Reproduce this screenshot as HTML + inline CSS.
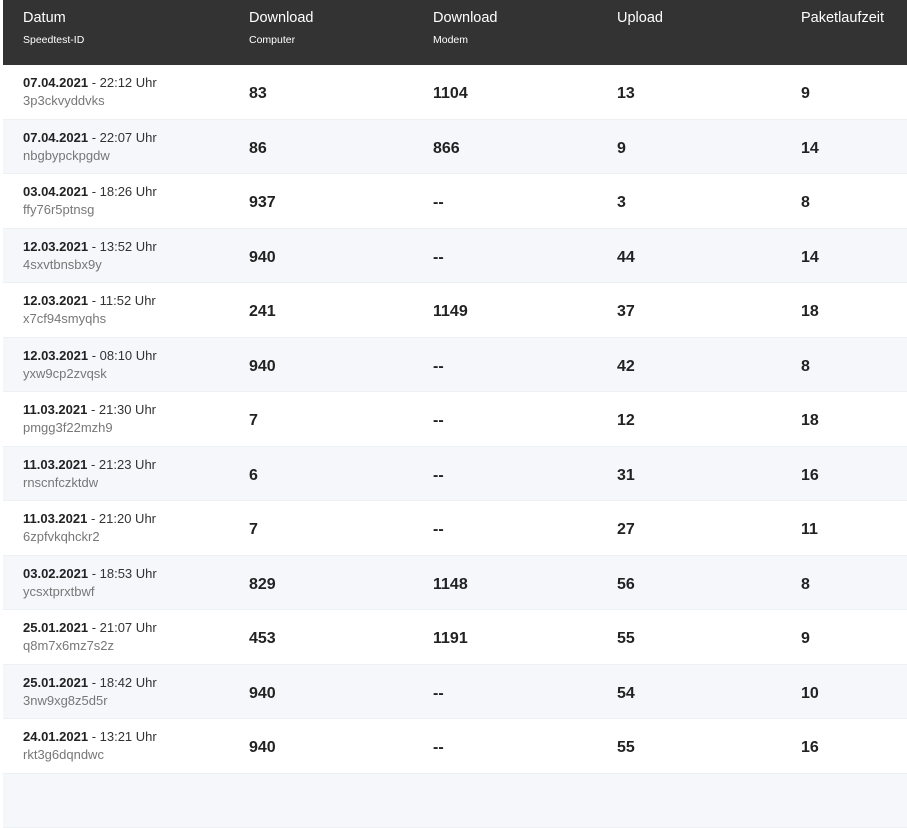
<!DOCTYPE html>
<html><head><meta charset="utf-8"><style>
body{margin:0;width:907px;height:781px;overflow:hidden;background:#fff;font-family:"Liberation Sans",sans-serif;color:#333}
.wrap{position:absolute;left:3px;top:0;width:904px}
.hd{height:65px;background:#333;position:relative;color:#fff}
.hd div{position:absolute;top:10px;font-size:14.5px}
.hd small{display:block;font-size:10.5px;margin-top:8px}
.row{height:54.5px;position:relative;border-bottom:1px solid #eef1f4;box-sizing:border-box}
.row:nth-child(odd){background:#f5f7fa}
.row div{position:absolute}
.d{left:20px;top:10px;font-size:13px;color:#333}
.d b{color:#222}
.d span{display:block;color:#777;margin-top:3px}
.v{top:20px;font-size:16px;font-weight:bold;color:#222}
</style></head><body><div class="wrap">
<div class="hd">
<div style="left:20px">Datum<small>Speedtest-ID</small></div>
<div style="left:246px">Download<small>Computer</small></div>
<div style="left:430px">Download<small>Modem</small></div>
<div style="left:614px">Upload</div>
<div style="left:798px">Paketlaufzeit</div>
</div>
<div id="rows"></div>
</div>
<script>
var d=[["07.04.2021","22:12","3p3ckvyddvks","83","1104","13","9"],["07.04.2021","22:07","nbgbypckpgdw","86","866","9","14"],["03.04.2021","18:26","ffy76r5ptnsg","937","--","3","8"],["12.03.2021","13:52","4sxvtbnsbx9y","940","--","44","14"],["12.03.2021","11:52","x7cf94smyqhs","241","1149","37","18"],["12.03.2021","08:10","yxw9cp2zvqsk","940","--","42","8"],["11.03.2021","21:30","pmgg3f22mzh9","7","--","12","18"],["11.03.2021","21:23","rnscnfczktdw","6","--","31","16"],["11.03.2021","21:20","6zpfvkqhckr2","7","--","27","11"],["03.02.2021","18:53","ycsxtprxtbwf","829","1148","56","8"],["25.01.2021","21:07","q8m7x6mz7s2z","453","1191","55","9"],["25.01.2021","18:42","3nw9xg8z5d5r","940","--","54","10"],["24.01.2021","13:21","rkt3g6dqndwc","940","--","55","16"],["","","","","","",""]];
var h="";d.forEach(function(r){h+='<div class="row">'+(r[0]?'<div class="d"><b>'+r[0]+'</b> - '+r[1]+' Uhr<span>'+r[2]+'</span></div><div class="v" style="left:246px">'+r[3]+'</div><div class="v" style="left:430px">'+r[4]+'</div><div class="v" style="left:614px">'+r[5]+'</div><div class="v" style="left:798px">'+r[6]+'</div>':'')+'</div>';});
document.getElementById("rows").outerHTML=h;
</script>
</body></html>
